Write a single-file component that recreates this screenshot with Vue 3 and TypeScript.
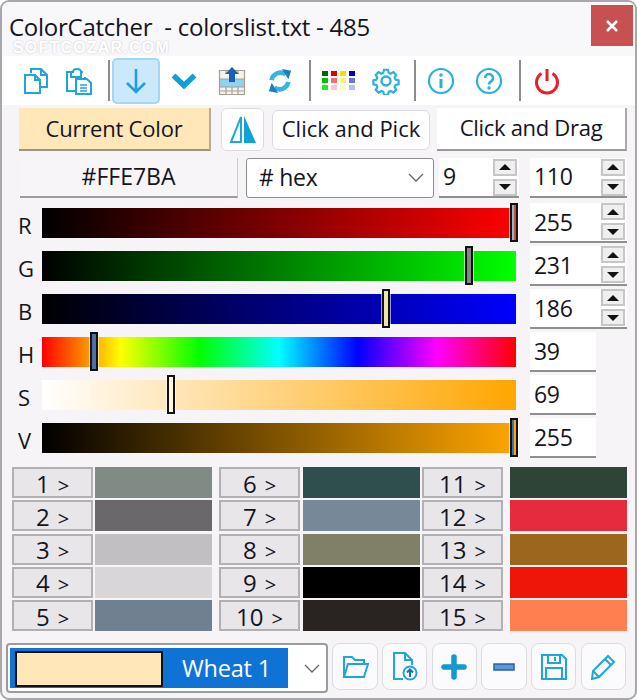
<script setup lang="ts">
interface Slider { label: string; grad: string; thumb: number; tint: string; value: string; spin: boolean }
const sliders: Slider[] = [
  { label: 'R', grad: 'linear-gradient(90deg,#000,#f00)', thumb: 472, tint: 'linear-gradient(90deg,#70c8c8 50%,#e04040 50%)', value: '255', spin: true },
  { label: 'G', grad: 'linear-gradient(90deg,#000,#0f0)', thumb: 427, tint: '#858585', value: '231', spin: true },
  { label: 'B', grad: 'linear-gradient(90deg,#000,#00f)', thumb: 344, tint: '#ece6a8', value: '186', spin: true },
  { label: 'H', grad: 'linear-gradient(90deg,#f00,#ff0 16.6%,#0f0 33.3%,#0ff 50%,#00f 66.6%,#f0f 83.3%,#f00)', thumb: 52, tint: '#4f6fa8', value: '39', spin: false },
  { label: 'S', grad: 'linear-gradient(90deg,#fff,#ffa600)', thumb: 129, tint: '#fff6e4', value: '69', spin: false },
  { label: 'V', grad: 'linear-gradient(90deg,#000,#ffa600)', thumb: 472, tint: 'linear-gradient(90deg,#3a70c0 50%,#ffa600 50%)', value: '255', spin: false },
]
const palette: { n: number; c: string }[] = [
  { n: 1, c: '#818b85' }, { n: 6, c: '#2f4f4f' }, { n: 11, c: '#2e4437' },
  { n: 2, c: '#6b686b' }, { n: 7, c: '#778899' }, { n: 12, c: '#e62b3e' },
  { n: 3, c: '#c1bfc1' }, { n: 8, c: '#808069' }, { n: 13, c: '#9c661f' },
  { n: 4, c: '#d8d6d8' }, { n: 9, c: '#000000' }, { n: 14, c: '#ee1509' },
  { n: 5, c: '#708090' }, { n: 10, c: '#292421' }, { n: 15, c: '#ff7f50' },
]
const swatches: string[] = [
  '#006400', '#e00000', '#f0e000', '#0000c0',
  '#00c000', '#f07070', '#fff080', '#7070e0',
  '#20f020', '#ffc0d0', '#ffffb0', '#b0c0ff',
]
</script>

<template>
  <div class="win">
    <header class="titlebar">
      <span class="title">ColorCatcher&nbsp; - colorslist.txt - 485</span>
      <span class="wm">SOFTCOZAR.COM</span>
      <button class="close">
        <svg width="14" height="14" viewBox="0 0 14 14"><path d="M2 2l10 10M12 2L2 12" stroke="#fff" stroke-width="2.6" /></svg>
      </button>
    </header>

    <nav class="toolbar">
      <button class="tb narrow">
        <svg width="26" height="28" viewBox="0 0 26 28" fill="none" stroke="#1fa6d8" stroke-width="2"><path d="M8 6V2h10l6 6v12h-6" /><path d="M18 2v6h6" /><path d="M2 8h10l5 5v13H2z" fill="#fff" /><path d="M12 8v5h5" /></svg>
      </button>
      <button class="tb narrow">
        <svg width="28" height="28" viewBox="0 0 28 28" fill="none" stroke="#1fa6d8" stroke-width="2"><path d="M8 5H2v19h8" /><path d="M18 5h-2V10H6V5h2c0-4 8-4 8 0" /><path d="M20 10v2" /><path d="M11 12h11l4 4v11H11z" fill="#fff" /><path d="M15 18h7M15 21h7M15 24h7" stroke-width="1.6" /></svg>
      </button>
      <i class="sep s1"></i>
      <button class="tb active">
        <svg width="24" height="28" viewBox="0 0 24 28" fill="none" stroke="#1fa0da" stroke-width="2.6"><path d="M12 2v23M3 16l9 9 9-9" /></svg>
      </button>
      <button class="tb">
        <svg width="26" height="16" viewBox="0 0 26 16" fill="none" stroke="#0f9fd9" stroke-width="5.500"><path d="M2.500 2.500l10.500 10 10.500-10" /></svg>
      </button>
      <button class="tb">
        <svg width="28" height="28" viewBox="0 0 28 28"><path d="M1 3h26v25H1z" fill="#f4f2ee" /><path d="M1 12h26v8H1z" fill="#8fd3f2" /><path d="M1.500 3.500h25v24h-25zM1 12h26M1 20h26M1 24h26M8 20v8M14 20v8M20 20v8M8 3v4M20 3v4" fill="none" stroke="#a89f8f" stroke-width="1.200" /><path d="M14 0l7 7h-4v8h-6V7H7z" fill="#1b5fb8" /></svg>
      </button>
      <button class="tb">
        <svg width="26" height="26" viewBox="0 0 28 26" fill="none"><path d="M5 12a9.500 9.500 0 0 1 15-6" stroke="#35b4e4" stroke-width="5" /><path d="M16 0l10 2-3 9z" fill="#1b7fc8" /><path d="M23 14a9.500 9.500 0 0 1-15 6" stroke="#35b4e4" stroke-width="5" /><path d="M12 26L2 24l3-9z" fill="#1b7fc8" /></svg>
      </button>
      <i class="sep s2"></i>
      <button class="tb first-b">
        <span class="swgrid"><i v-for="(s, k) in swatches" :key="k" class="sq" :style="{ background: s }"></i></span>
      </button>
      <button class="tb">
        <svg width="28" height="28" viewBox="0 0 28 28" fill="none" stroke="#2bb0dc" stroke-width="2.400"><circle cx="14" cy="14" r="4.500" /><path d="M11.800 1.500h4.400l.8 3.400 2.300 1 3-1.800 3.100 3.100-1.800 3 1 2.300 3.400.8v4.400l-3.400.8-1 2.300 1.800 3-3.100 3.100-3-1.800-2.300 1-.8 3.400h-4.400l-.8-3.400-2.300-1-3 1.800-3.100-3.100 1.800-3-1-2.300-3.400-.8v-4.400l3.400-.8 1-2.300-1.800-3 3.100-3.100 3 1.800 2.300-1z" transform="translate(1.400 1.400) scale(.9)" /></svg>
      </button>
      <i class="sep s3"></i>
      <button class="tb first-c">
        <svg width="28" height="28" viewBox="0 0 28 28" fill="none" stroke="#2bb0dc" stroke-width="2.200"><circle cx="14" cy="14" r="12" /><path d="M14 12v9" stroke-width="3" /><circle cx="14" cy="8" r="1.800" fill="#2bb0dc" stroke="none" /></svg>
      </button>
      <button class="tb">
        <svg width="28" height="28" viewBox="0 0 28 28" fill="none" stroke="#2bb0dc" stroke-width="2.200"><circle cx="14" cy="14" r="12" /><path d="M10 11a4 4 0 1 1 6 3.500c-1.500.8-2 1.500-2 3" stroke-width="2.600" /><circle cx="14" cy="21" r="1.700" fill="#2bb0dc" stroke="none" /></svg>
      </button>
      <i class="sep s4"></i>
      <button class="tb first-d">
        <svg width="26" height="28" viewBox="0 0 26 28" fill="none" stroke="#ee1c25" stroke-width="3"><path d="M13 2v12" /><path d="M7.500 6.500a10.500 10.500 0 1 0 11 0" /></svg>
      </button>
    </nav>

    <main class="body">
      <section class="row1">
        <div class="current">Current Color</div>
        <button class="flip">
          <svg width="28" height="32" viewBox="0 0 28 32"><path d="M12 3L2 28h10z" fill="#fff" stroke="#1fa6d8" stroke-width="2" /><path d="M15 2l12 27H15z" fill="#0fa3d8" /></svg>
        </button>
        <button class="pick">Click and Pick</button>
        <button class="drag">Click and Drag</button>
      </section>

      <section class="row2">
        <div class="hexval">#FFE7BA</div>
        <div class="select">
          <span># hex</span>
          <svg width="16" height="9" viewBox="0 0 16 9" fill="none" stroke="#666" stroke-width="1.300"><path d="M1 1l7 7 7-7" /></svg>
        </div>
        <div class="field f9">
          <span>9</span>
          <div class="spin"><b class="up"></b><b class="down"></b></div>
        </div>
        <div class="field f110">
          <span>110</span>
          <div class="spin"><b class="up"></b><b class="down"></b></div>
        </div>
      </section>

      <section class="sliders">
        <div v-for="s in sliders" :key="s.label" class="srow">
          <span class="slabel">{{ s.label }}</span>
          <div class="track" :style="{ background: s.grad }">
            <i class="thumb" :style="{ left: s.thumb - 4 + 'px', background: s.tint }"></i>
          </div>
          <div class="field val" :class="{ short: !s.spin }">
            <span>{{ s.value }}</span>
            <div v-if="s.spin" class="spin"><b class="up"></b><b class="down"></b></div>
          </div>
        </div>
      </section>

      <section class="palette">
        <div v-for="p in palette" :key="p.n" class="pcell">
          <button class="pbtn">{{ p.n }}<small>&gt;</small></button>
          <div class="pswatch" :style="{ background: p.c }"></div>
        </div>
      </section>

      <section class="bottom">
        <div class="combo">
          <div class="selected">
            <span class="cswatch"></span>
            <span class="cname">Wheat 1</span>
          </div>
          <svg class="chev" width="16" height="9" viewBox="0 0 16 9" fill="none" stroke="#666" stroke-width="1.300"><path d="M1 1l7 7 7-7" /></svg>
        </div>
        <button class="bb">
          <svg width="28" height="24" viewBox="0 0 28 24" fill="none" stroke="#1fa6d8" stroke-width="2"><path d="M3 22V2h8l3 3h9v4" /><path d="M3 22l4-13h20l-4 13z" /></svg>
        </button>
        <button class="bb">
          <svg width="26" height="30" viewBox="0 0 26 30" fill="none" stroke="#1fa6d8" stroke-width="2"><path d="M11 27H2V1h11l7 7v5" /><path d="M13 1v7h7" /><circle cx="18" cy="21" r="6.500" /><path d="M18 25v-7M15 20.500l3-3 3 3" stroke="#1b6fb8" /></svg>
        </button>
        <button class="bb">
          <svg width="26" height="26" viewBox="0 0 26 26" fill="none" stroke="#1398cf" stroke-width="5.500" stroke-linecap="round"><path d="M13 3v20M3 13h20" /></svg>
        </button>
        <button class="bb">
          <svg width="22" height="8" viewBox="0 0 22 8"><rect x="1" y="1" width="20" height="6" fill="#5a9ad8" stroke="#2b5fa8" stroke-width="1.500" /></svg>
        </button>
        <button class="bb">
          <svg width="26" height="26" viewBox="0 0 26 26" fill="none" stroke="#1fa6d8" stroke-width="2"><path d="M1 1h20l4 4v20H1z" /><path d="M7 1v8h12V1M14 3v4" /><path d="M5 25V14h16v11" /></svg>
        </button>
        <button class="bb">
          <svg width="26" height="26" viewBox="0 0 26 26" fill="none" stroke="#1fa6d8" stroke-width="2"><path d="M18 2l6 6L9 23l-7 2 1-8z" /><path d="M15 5l6 6M3 17l6 6" /></svg>
        </button>
      </section>
    </main>
  </div>
</template>

<style>
html, body { margin: 0; background: #fff; }
</style>

<style scoped>
* { box-sizing: border-box; }
button { padding: 0; font: inherit; color: inherit; cursor: default; }
.win {
  width: 637px; height: 700px; display: flex; flex-direction: column;
  border: 2px solid #a8a8ac; border-radius: 9px; overflow: hidden;
  background: #f6f4f7; color: #14141c;
  font-family: "Open Sans", "Noto Sans", sans-serif;
}
.titlebar {
  position: relative; height: 54px; flex: none; display: flex; align-items: center;
  padding: 0 2px 0 7px; background: #f8f7fa;
}
.title { font-size: 24px; line-height: 24px; letter-spacing: -.25px; margin-top: -5px; white-space: nowrap; }
.wm {
  position: absolute; left: 11px; top: 38px; font-size: 16px; line-height: 16px; font-weight: 700; letter-spacing: 1.200px;
  color: #fff; text-shadow: 0 0 2px #c0c0c6; font-family: "Liberation Sans", sans-serif;
}
.close {
  margin-left: auto; margin-top: -7px; width: 42px; height: 41px; border: 0; background: #c75050;
  display: flex; align-items: center; justify-content: center;
}
.toolbar {
  height: 49px; flex: none; background: #fff; display: flex; align-items: center; padding-left: 12px;
}
.tb {
  width: 48px; height: 46px; flex: none; border: 0; background: transparent;
  display: flex; align-items: center; justify-content: center;
}
.tb.narrow { width: 43px; }
.tb.active { background: #cce8fb; border: 2px solid #a3d6f7; border-radius: 5px; margin-left: 2px; }
.sep { width: 2px; height: 41px; background: #8c8c8c; flex: none; }
.s1 { margin-left: 8px; }
.s2 { margin-left: 5px; }
.s3 { margin-left: 4px; }
.s4 { margin-left: 6px; }
.first-b { margin-left: 3px; }
.first-c { margin-left: 1px; }
.first-d { margin-left: 2px; }
.swgrid { display: grid; grid-template-columns: repeat(4, 6px); grid-auto-rows: 5px; gap: 2px 3px; }
.sq { display: block; }
.body { flex: 1; display: flex; flex-direction: column; min-height: 0; }
.row1 { display: flex; height: 43px; margin-top: 3px; flex: none; font-size: 22px; letter-spacing: -.2px; }
.current {
  margin-left: 17px; width: 192px; background: #ffe7ba; border-bottom: 2px solid #9b9486; border-right: 2px solid #b5ad9c;
  display: flex; align-items: center; justify-content: center; padding-bottom: 2px;
}
.flip {
  margin-left: 10px; width: 43px; background: #fff; border: 1.500px solid #dcdce0; border-radius: 6px;
  display: flex; align-items: center; justify-content: center;
}
.pick { margin-left: 8px; width: 158px; height: 40px; margin-top: 2px; background: #fff; border: 1.500px solid #dcdce0; border-radius: 6px; padding-bottom: 4px; }
.drag { margin-left: 7px; width: 190px; background: #fff; border: 0; border-right: 2px solid #aaa; border-bottom: 2px solid #999; padding-bottom: 3px; letter-spacing: -.3px; }
.row2 { display: flex; height: 40px; margin-top: 7px; flex: none; font-size: 23px; letter-spacing: -.3px; }
.hexval {
  margin-left: 18px; width: 218px; background: #f7f5f8; border-bottom: 2px solid #9c9c9c; border-right: 1px solid #ccc;
  display: flex; align-items: center; justify-content: center; padding-bottom: 2px; letter-spacing: 0;
}
.select {
  margin-left: 8px; width: 188px; background: #fff; border: 1.500px solid #8d8d8d; border-radius: 3px;
  display: flex; align-items: center; justify-content: space-between; padding: 0 9px 2px 12px;
}
.field { background: #fff; border-bottom: 2px solid #8f8f8f; display: flex; align-items: center; justify-content: space-between; }
.f9 { margin-left: 5px; width: 80px; padding: 0 2px 0 4px; }
.f110 { margin-left: 11px; width: 97px; padding: 0 2px 0 4px; }
.f9 > span, .f110 > span { margin-top: -2px; }
.spin { display: flex; flex-direction: column; gap: 3px; }
.spin b {
  width: 24px; height: 17px; background: #efefef; border: 2px solid #c6c6c6;
  display: flex; align-items: center; justify-content: center;
}
.spin b::after { content: ""; border-left: 6px solid transparent; border-right: 6px solid transparent; }
.up::after { border-bottom: 6px solid #111; }
.down::after { border-top: 6px solid #111; }
.sliders { display: grid; grid-template-rows: repeat(6, 43px); margin-top: 3px; flex: none; }
.srow { display: flex; align-items: center; padding-left: 16px; }
.slabel { width: 24px; font-size: 22px; padding-top: 5px; }
.track { position: relative; width: 474px; height: 30px; flex: none; }
.thumb {
  position: absolute; top: -5px; width: 8px; height: 39px; border: 2px solid #111;
  box-shadow: 0 0 0 1px rgba(255, 255, 255, .6);
}
.val { margin-left: 14px; width: 97px; height: 40px; flex: none; padding: 0 2px 0 4px; font-size: 23px; letter-spacing: -.3px; }
.val.short { width: 66px; }
.palette {
  margin: 8px 0 0 10px; width: 615px; display: grid; flex: none;
  grid-template-columns: 205px 201px 205px; column-gap: 2px; grid-auto-rows: 31px; row-gap: 2.300px;
}
.pcell { display: flex; gap: 2px; }
.pcell:nth-child(3n + 2) { gap: 3px; }
.pcell:nth-child(3n) { gap: 7px; }
.pbtn {
  width: 81px; flex: none; background: #e9e6ea; border: 2px solid #b2b0b2; font-size: 24px; line-height: 1; padding-top: 2px;
}
.pbtn small { font-size: 20px; margin-left: 8px; }
.pswatch { width: 117px; flex: none; }
.bottom { display: flex; margin: 12px 0 0 4px; height: 50px; flex: none; }
.combo {
  width: 322px; border: 2px solid #9b9b9b; border-radius: 4px; background: #fff;
  display: flex; align-items: center; padding: 0 2px; position: relative;
}
.selected {
  width: 278px; height: 40px; background: #0f73d6; color: #fff; display: flex; align-items: center; padding: 3px 4px 1px 5px; flex: none;
}
.cswatch { width: 148px; height: 36px; background: #ffe7ba; border: 2px solid #111; flex: none; }
.cname { margin: -3px 0 0 19px; font-size: 23.500px; letter-spacing: -.2px; }
.chev { margin-left: 16px; }
.bb {
  width: 45.500px; height: 47px; margin-left: 4.200px; background: #fbfafc; border: 1.500px solid #dcdbe0; border-radius: 8px; flex: none;
  display: flex; align-items: center; justify-content: center;
}
</style>
